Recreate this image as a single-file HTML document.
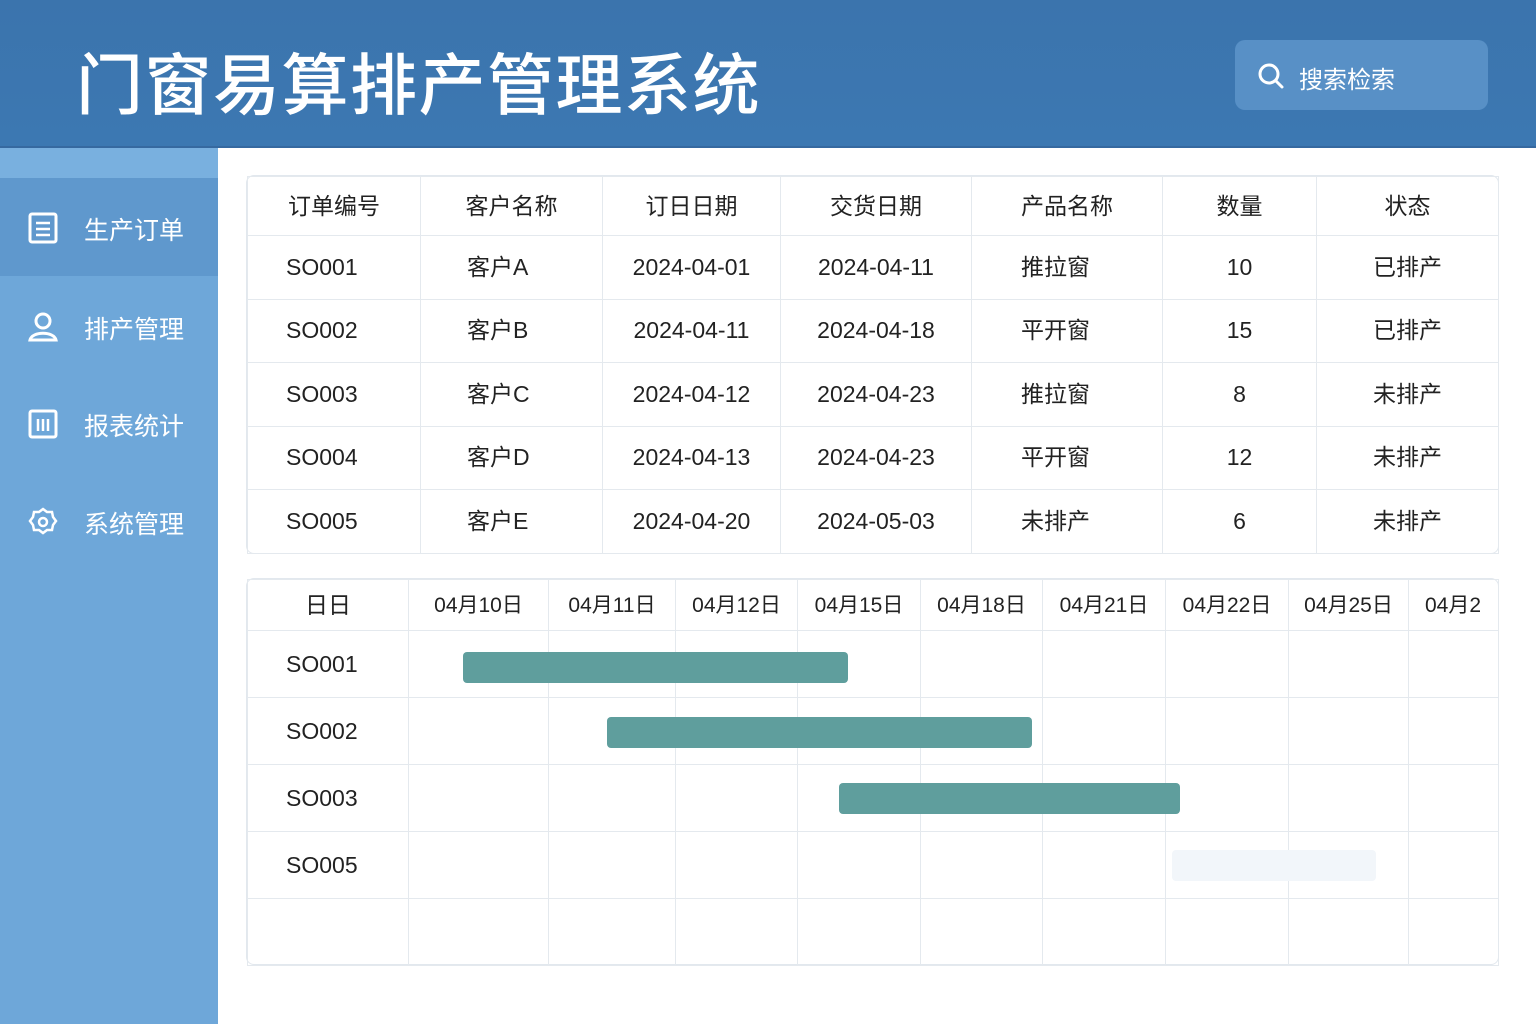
<!DOCTYPE html><html><head><meta charset="utf-8"><style>
*{margin:0;padding:0;box-sizing:border-box}
body{width:1536px;height:1024px;overflow:hidden;background:#fff;font-family:"Liberation Sans","Noto Sans CJK SC",sans-serif;position:relative}
.hd{position:absolute;left:0;top:0;width:1536px;height:148px;background:linear-gradient(#3b74ad,#3c78b2);border-bottom:2px solid #3669a0}
.hd h1{position:absolute;left:76px;top:32px;font-size:67px;color:#fff;font-weight:500;letter-spacing:1.5px;font-family:"Noto Sans CJK SC",sans-serif}
.sr{position:absolute;left:1235px;top:40px;width:253px;height:70px;border-radius:10px;background:#5890c6;color:#fff;font-size:24px}
.sr span{position:absolute;left:64px;top:20px}
.sb{position:absolute;left:0;top:148px;width:218px;height:876px;background:#6ea7d9}
.sb .top{height:30px;background:#79b0df}
.it{position:absolute;left:0;width:218px;height:98px;color:#fff;font-size:25px}
.it.a{background:#5f98cd}
.it span{position:absolute;left:84px;top:33px}
.it svg{position:absolute;left:28px;top:34px}
table{border-collapse:collapse;position:absolute;font-size:23px;color:#222;table-layout:fixed}
td{border:1px solid #e4e9ee;text-align:center;line-height:1;padding:0}
.t1{left:247px;top:176px;width:1251px}
.t1 tr{height:63.5px}
.t1 tr:first-child{height:59px}
.t1.o tr+tr td:nth-child(2){text-align:left;padding-left:46px}
.t1.o tr+tr td:nth-child(5){text-align:left;padding-left:49px}
.box{position:absolute;border:1px solid #e2e8ee;border-radius:8px}
.g tr{height:67px}
.g tr:first-child{height:51px}
.bar{position:absolute;background:#5f9e9d;border-radius:4px;height:31px}
</style></head><body>
<div class="hd"><h1>门窗易算排产管理系统</h1>
<div class="sr"><svg style="position:absolute;left:22px;top:22px" width="28" height="28" viewBox="0 0 28 28"><circle cx="12" cy="12" r="9" fill="none" stroke="#fff" stroke-width="3"/><path d="M19 19l6 6" stroke="#fff" stroke-width="3" stroke-linecap="round"/></svg><span>搜索检索</span></div></div>
<div class="sb"><div class="top"></div></div>
<div class="it a" style="top:178px"><svg width="30" height="32" viewBox="0 0 30 32"><rect x="2" y="2" width="26" height="28" rx="2" fill="none" stroke="#fff" stroke-width="3"/><path d="M8 11h14M8 17h14M8 23h14" stroke="#fff" stroke-width="2.5"/></svg><span>生产订单</span></div>
<div class="it" style="top:277px"><svg width="30" height="32" viewBox="0 0 30 32"><circle cx="15" cy="10" r="7" fill="none" stroke="#fff" stroke-width="3"/><path d="M2 29c2-9 24-9 26 0z" fill="none" stroke="#fff" stroke-width="3"/></svg><span>排产管理</span></div>
<div class="it" style="top:374px"><svg width="30" height="32" viewBox="0 0 30 32"><rect x="2" y="3" width="26" height="26" rx="2" fill="none" stroke="#fff" stroke-width="3"/><path d="M10 11v12M15 11v12M20 11v12" stroke="#fff" stroke-width="2.5"/></svg><span>报表统计</span></div>
<div class="it" style="top:472px"><svg width="30" height="32" viewBox="0 0 30 32"><path d="M15 3l4 3 5 0 1 5 3 4-3 4-1 5-5 0-4 3-4-3-5 0-1-5-3-4 3-4 1-5 5 0z" fill="none" stroke="#fff" stroke-width="2.5"/><circle cx="15" cy="16" r="4" fill="none" stroke="#fff" stroke-width="2.5"/></svg><span>系统管理</span></div>
<div class="box" style="left:246px;top:175px;width:1253px;height:379px"></div>
<table class="t1 o">
<colgroup><col width="173"><col width="182"><col width="178"><col width="191"><col width="191"><col width="154"><col width="182"></colgroup>
<tr><td>订单编号</td><td>客户名称</td><td>订日日期</td><td>交货日期</td><td>产品名称</td><td>数量</td><td>状态</td></tr>
<tr><td style="text-align:left;padding-left:38px">SO001</td><td>客户A</td><td>2024-04-01</td><td>2024-04-11</td><td>推拉窗</td><td>10</td><td>已排产</td></tr>
<tr><td style="text-align:left;padding-left:38px">SO002</td><td>客户B</td><td>2024-04-11</td><td>2024-04-18</td><td>平开窗</td><td>15</td><td>已排产</td></tr>
<tr><td style="text-align:left;padding-left:38px">SO003</td><td>客户C</td><td>2024-04-12</td><td>2024-04-23</td><td>推拉窗</td><td>8</td><td>未排产</td></tr>
<tr><td style="text-align:left;padding-left:38px">SO004</td><td>客户D</td><td>2024-04-13</td><td>2024-04-23</td><td>平开窗</td><td>12</td><td>未排产</td></tr>
<tr><td style="text-align:left;padding-left:38px">SO005</td><td>客户E</td><td>2024-04-20</td><td>2024-05-03</td><td>未排产</td><td>6</td><td>未排产</td></tr>
</table>
<div class="box" style="left:246px;top:578px;width:1253px;height:387px"></div>
<table class="t1 g" style="top:579px;font-size:21px">
<colgroup><col width="161"><col width="140"><col width="127"><col width="122"><col width="123"><col width="122"><col width="123"><col width="123"><col width="120"><col width="90"></colgroup>
<tr><td style="font-size:23px">日日</td><td>04月10日</td><td>04月11日</td><td>04月12日</td><td>04月15日</td><td>04月18日</td><td>04月21日</td><td>04月22日</td><td>04月25日</td><td style="text-align:left;padding-left:16px;overflow:hidden;white-space:nowrap">04月2</td></tr>
<tr><td style="font-size:23px;text-align:left;padding-left:38px">SO001</td><td></td><td></td><td></td><td></td><td></td><td></td><td></td><td></td><td></td></tr>
<tr><td style="font-size:23px;text-align:left;padding-left:38px">SO002</td><td></td><td></td><td></td><td></td><td></td><td></td><td></td><td></td><td></td></tr>
<tr><td style="font-size:23px;text-align:left;padding-left:38px">SO003</td><td></td><td></td><td></td><td></td><td></td><td></td><td></td><td></td><td></td></tr>
<tr><td style="font-size:23px;text-align:left;padding-left:38px">SO005</td><td></td><td></td><td></td><td></td><td></td><td></td><td></td><td></td><td></td></tr>
<tr><td></td><td></td><td></td><td></td><td></td><td></td><td></td><td></td><td></td><td></td></tr>
</table>
<div class="bar" style="left:463px;top:652px;width:385px"></div>
<div class="bar" style="left:607px;top:717px;width:425px"></div>
<div class="bar" style="left:839px;top:783px;width:341px"></div>
<div class="bar" style="left:1172px;top:850px;width:204px;background:#f2f6fa"></div>
</body></html>
